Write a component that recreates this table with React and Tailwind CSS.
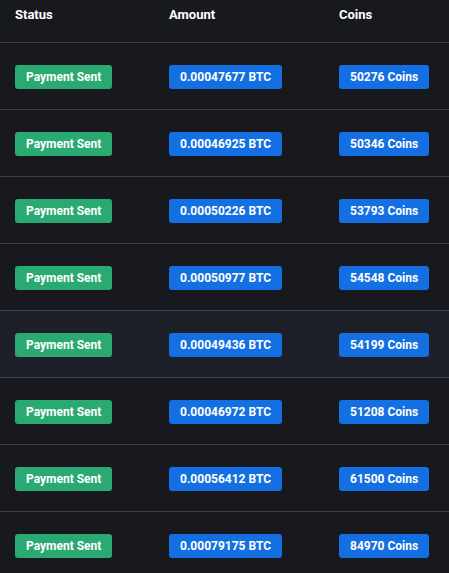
const rows = [
    { btc: '0.00047677', coins: '50276' },
    { btc: '0.00046925', coins: '50346' },
    { btc: '0.00050226', coins: '53793' },
    { btc: '0.00050977', coins: '54548' },
    { btc: '0.00049436', coins: '54199', hover: true },
    { btc: '0.00046972', coins: '51208' },
    { btc: '0.00056412', coins: '61500' },
    { btc: '0.00079175', coins: '84970' },
];

function Badge({ color, children }) {
    return (
        <span className={`inline-flex h-[24px] items-center rounded-[3px] px-[11px] text-[12px] font-bold text-white ${color}`}>
            {children}
        </span>
    );
}

export default function App() {
    return (
        <div className="min-h-screen bg-[#18191e] font-['Roboto',sans-serif] text-white">
            {/* Header */}
            <div className="grid h-[43px] grid-cols-[154px_170px_1fr] border-b border-[#3b3e48] pt-[5px] text-[13px] font-bold">
                <div className="pl-[15px]">Status</div>
                <div className="pl-[15px]">Amount</div>
                <div className="pl-[15px]">Coins</div>
            </div>

            {rows.map((r, i) => (
                <div
                    key={i}
                    className={`grid h-[67px] grid-cols-[154px_170px_1fr] items-center border-b border-[#3b3e48] ${r.hover ? 'bg-[#1e2029]' : ''}`}
                >
                    <div className="pl-[15px]">
                        <Badge color="bg-[#2aaa72]">Payment Sent</Badge>
                    </div>
                    <div className="pl-[15px]">
                        <Badge color="bg-[#1470e2]">{r.btc} BTC</Badge>
                    </div>
                    <div className="pl-[15px]">
                        <Badge color="bg-[#1470e2]">{r.coins} Coins</Badge>
                    </div>
                </div>
            ))}
        </div>
    );
}
